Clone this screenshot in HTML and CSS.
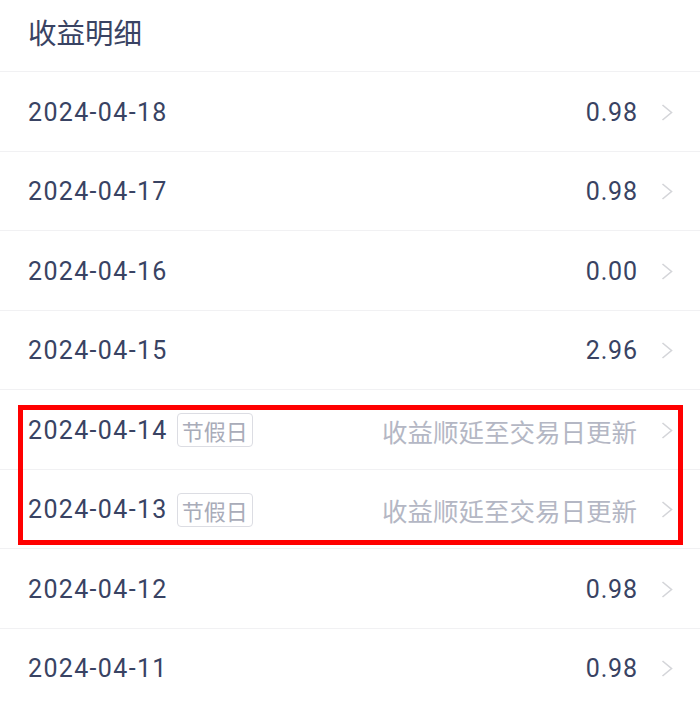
FILE: index.html
```html
<!DOCTYPE html>
<html lang="zh-CN">
<head>
<meta charset="utf-8">
<link rel="stylesheet" href="styles.css">
</head>
<body>
<div class="page">
  <div class="header"><span class="title">收益明细</span></div>
  <div class="list">
    <div class="row"><span class="date">2024-04-18</span><span class="amount">0.98</span><svg class="chev" viewBox="0 0 12 17"><polyline points="1.5,1 10.5,8.5 1.5,16"/></svg></div>
    <div class="row"><span class="date">2024-04-17</span><span class="amount">0.98</span><svg class="chev" viewBox="0 0 12 17"><polyline points="1.5,1 10.5,8.5 1.5,16"/></svg></div>
    <div class="row"><span class="date">2024-04-16</span><span class="amount">0.00</span><svg class="chev" viewBox="0 0 12 17"><polyline points="1.5,1 10.5,8.5 1.5,16"/></svg></div>
    <div class="row"><span class="date">2024-04-15</span><span class="amount">2.96</span><svg class="chev" viewBox="0 0 12 17"><polyline points="1.5,1 10.5,8.5 1.5,16"/></svg></div>
    <div class="group">
      <div class="row"><span class="date">2024-04-14</span><span class="tag">节假日</span><span class="note">收益顺延至交易日更新</span><svg class="chev" viewBox="0 0 12 17"><polyline points="1.5,1 10.5,8.5 1.5,16"/></svg></div>
      <div class="row"><span class="date">2024-04-13</span><span class="tag">节假日</span><span class="note">收益顺延至交易日更新</span><svg class="chev" viewBox="0 0 12 17"><polyline points="1.5,1 10.5,8.5 1.5,16"/></svg></div>
      <div class="highlight"></div>
    </div>
    <div class="row"><span class="date">2024-04-12</span><span class="amount">0.98</span><svg class="chev" viewBox="0 0 12 17"><polyline points="1.5,1 10.5,8.5 1.5,16"/></svg></div>
    <div class="row"><span class="date">2024-04-11</span><span class="amount">0.98</span><svg class="chev" viewBox="0 0 12 17"><polyline points="1.5,1 10.5,8.5 1.5,16"/></svg></div>
  </div>
</div>
</body>
</html>
```

FILE: styles.css
```css
html, body {
  margin: 0;
  padding: 0;
  background: #ffffff;
}
body {
  font-family: "Roboto", "Noto Sans CJK SC", sans-serif;
  color: #394363;
  width: 700px;
  height: 705px;
  overflow: hidden;
}
.header {
  box-sizing: border-box;
  height: 72px;
  padding-left: 28px;
  display: flex;
  align-items: center;
  padding-bottom: 8px;
  border-bottom: 1px solid #f1f1f3;
}
.title {
  font-family: "Noto Sans CJK SC", sans-serif;
  font-size: 28.5px;
  color: #394363;
}
.row {
  box-sizing: border-box;
  height: 79.5px;
  display: flex;
  align-items: center;
  padding: 2px 27px 0 28px;
  border-bottom: 1px solid #f1f1f3;
}
.date {
  font-size: 25px;
  letter-spacing: 1.35px;
  color: #394363;
}
.amount {
  margin-left: auto;
  font-size: 25px;
  letter-spacing: 0.8px;
  margin-right: -0.8px;
  color: #394363;
}
.tag {
  box-sizing: border-box;
  height: 34px;
  margin-left: 9px;
  padding: 0 4px;
  display: flex;
  align-items: center;
  font-family: "Noto Sans CJK SC", sans-serif;
  font-size: 22px;
  color: #a9acb9;
  border: 1px solid #dcdde3;
  border-radius: 4px;
}
.note {
  margin-left: auto;
  font-family: "Noto Sans CJK SC", sans-serif;
  font-size: 25.5px;
  color: #b4b7c4;
}
.chev {
  width: 12px;
  height: 17px;
  margin-left: 24px;
  flex: none;
}
.chev polyline {
  fill: none;
  stroke: #d4d5d9;
  stroke-width: 1.6;
}
.group {
  position: relative;
}
.highlight {
  position: absolute;
  left: 18px;
  right: 17px;
  top: 15px;
  bottom: 4px;
  border: 5px solid #ff0000;
  pointer-events: none;
}
```
